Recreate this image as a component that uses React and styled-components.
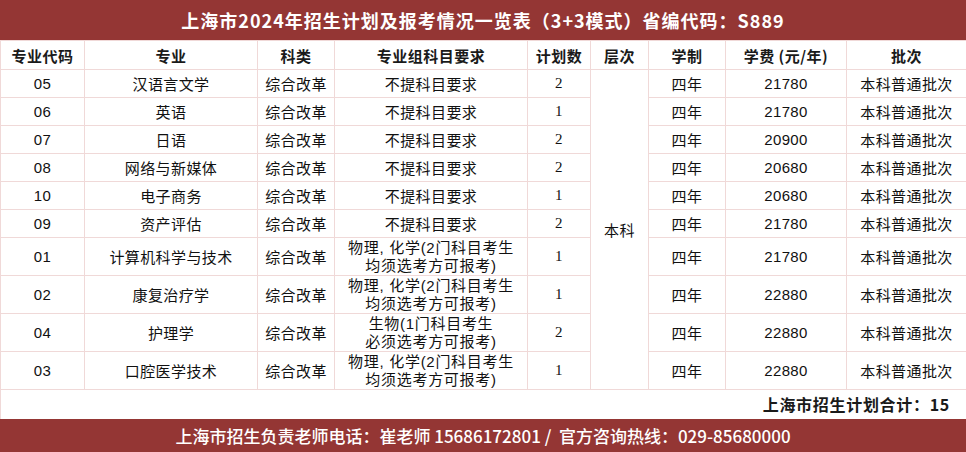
import styled, { createGlobalStyle } from 'styled-components';

const GlobalStyle = createGlobalStyle`
  body {
    margin: 0;
    background: #fff;
    font-family: "Liberation Sans", "Noto Sans CJK SC", sans-serif;
    color: #111;
  }
`;

const Page = styled.div`
  width: 966px;
  height: 452px;
  display: flex;
  flex-direction: column;
  overflow: hidden;
`;

const Banner = styled.div`
  height: ${(p) => p.$height}px;
  flex-shrink: 0;
  background: #943634;
  color: #fff;
  display: flex;
  align-items: center;
  justify-content: center;
  font-family: "Noto Sans CJK SC", sans-serif;
  font-size: ${(p) => p.$size}px;
  font-weight: ${(p) => (p.$bold ? 700 : 500)};
  letter-spacing: ${(p) => p.$spacing}px;
  white-space: nowrap;
`;

const Table = styled.table`
  width: 966px;
  table-layout: fixed;
  border-collapse: collapse;
  flex-shrink: 0;
`;

const Row = styled.tr`
  height: ${(p) => p.$height}px;
`;

const Head = styled.th`
  border: 1px solid #f0d9d8;
  padding: 0;
  font-family: "Noto Sans CJK SC", sans-serif;
  font-size: 15px;
  font-weight: 700;
  letter-spacing: 0.5px;
  color: #1a1a1a;
  text-align: center;
  white-space: nowrap;
`;

const Cell = styled.td`
  border: 1px solid #f0d9d8;
  padding: 0;
  font-size: 15px;
  line-height: ${(p) => (p.$small ? '18px' : 'normal')};
  letter-spacing: ${(p) => (p.$small ? 0.7 : 0.4)}px;
  text-align: center;
  vertical-align: middle;
  white-space: nowrap;
  font-family: ${(p) =>
    p.$serif
      ? '"Liberation Serif", "Noto Sans CJK SC", serif'
      : '"Liberation Sans", "Noto Sans CJK SC", sans-serif'};
`;

const TotalCell = styled.td`
  border: 1px solid #f0d9d8;
  border-bottom: none;
  padding: 0 16px 0 0;
  text-align: right;
  font-family: "Noto Sans CJK SC", sans-serif;
  font-size: 16px;
  font-weight: 700;
  letter-spacing: 0.7px;
  color: #1a1a1a;
`;

const columns = [84, 173, 77, 193, 63, 58, 77, 121, 120];
const headers = ['专业代码', '专业', '科类', '专业组科目要求', '计划数', '层次', '学制', '学费 (元/年)', '批次'];

const NONE = '不提科目要求';
const TWO = ['物理, 化学(2门科目考生', '均须选考方可报考)'];
const BIO = ['生物(1门科目考生', '必须选考方可报考)'];

const rows = [
  ['05', '汉语言文学', NONE, '2', '21780'],
  ['06', '英语', NONE, '1', '21780'],
  ['07', '日语', NONE, '2', '20900'],
  ['08', '网络与新媒体', NONE, '2', '20680'],
  ['10', '电子商务', NONE, '1', '20680'],
  ['09', '资产评估', NONE, '2', '21780'],
  ['01', '计算机科学与技术', TWO, '1', '21780'],
  ['02', '康复治疗学', TWO, '1', '22880'],
  ['04', '护理学', BIO, '2', '22880'],
  ['03', '口腔医学技术', TWO, '1', '22880'],
];

function App() {
  return (
    <Page>
      <GlobalStyle />
      <Banner $height={40} $size={18} $spacing={1} $bold>
        上海市2024年招生计划及报考情况一览表（3+3模式）省编代码：S889
      </Banner>
      <Table>
        <colgroup>
          {columns.map((w, i) => (
            <col key={i} style={{ width: w }} />
          ))}
        </colgroup>
        <tbody>
          <Row $height={29}>
            {headers.map((h) => (
              <Head key={h}>{h}</Head>
            ))}
          </Row>
          {rows.map(([code, major, req, plan, fee], i) => {
            const tall = Array.isArray(req);
            return (
              <Row key={code} $height={tall ? 38 : 28}>
                <Cell>{code}</Cell>
                <Cell>{major}</Cell>
                <Cell>综合改革</Cell>
                <Cell $small={tall}>
                  {tall ? (
                    <>
                      {req[0]}
                      <br />
                      {req[1]}
                    </>
                  ) : (
                    req
                  )}
                </Cell>
                <Cell $serif>{plan}</Cell>
                {i === 0 && <Cell rowSpan={rows.length}>本科</Cell>}
                <Cell>四年</Cell>
                <Cell>{fee}</Cell>
                <Cell>本科普通批次</Cell>
              </Row>
            );
          })}
          <Row $height={29}>
            <TotalCell colSpan={9}>上海市招生计划合计：15</TotalCell>
          </Row>
        </tbody>
      </Table>
      <Banner $height={34} $size={17} $spacing={0}>
        上海市招生负责老师电话：崔老师 15686172801 /&nbsp; 官方咨询热线：029-85680000
      </Banner>
    </Page>
  );
}

export default App;
